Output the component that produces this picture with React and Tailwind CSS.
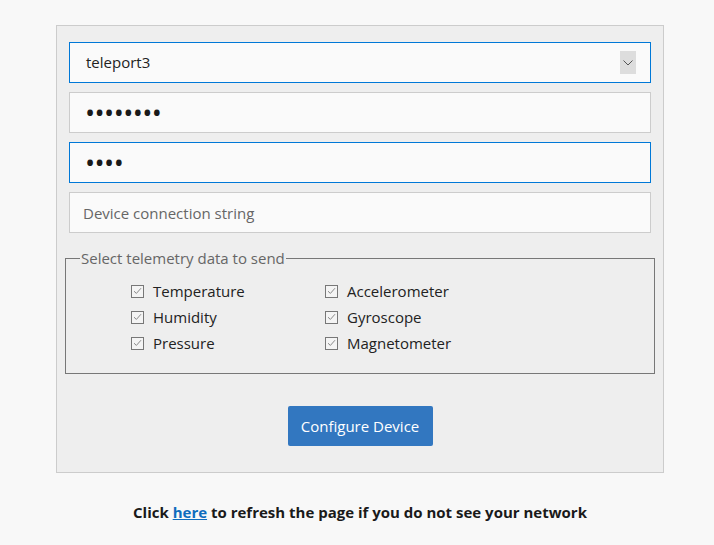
import { useState } from 'react';

const sensors = [
  ['Temperature', 'Accelerometer'],
  ['Humidity', 'Gyroscope'],
  ['Pressure', 'Magnetometer'],
];

const Check = ({ label }) => (
  <label className="flex items-center h-[26px] text-[15px] text-[#222]">
    <span className="w-[13px] h-[13px] border border-[#777] bg-[#f4f4f4] flex items-center justify-center mr-[9px]">
      <svg width="9" height="8" viewBox="0 0 9 8">
        <path d="M1 4.2 L3.4 6.4 L8 1.2" fill="none" stroke="#8a8a8a" strokeWidth="1" />
      </svg>
    </span>
    {label}
  </label>
);

export default function App() {
  const [network] = useState('teleport3');

  return (
    <div className="min-h-screen bg-[#f8f8f8] pt-[25px] font-['Open_Sans',sans-serif]">
      <div className="ml-[56px] w-[608px]">
        <div className="border border-[#cccccc] bg-[#eeeeee] px-[12px] pt-[16px] pb-[26px]">
          <div className="flex flex-col gap-[9px]">
            {/* Network select */}
            <div className="h-[41px] border border-[#0078d7] bg-[#fafafa] flex items-center justify-between pl-[16px] pr-[14px]">
              <span className="text-[15px] text-[#222]">{network}</span>
              <span className="w-[16px] h-[23px] bg-[#dddddd] flex items-center justify-center">
                <svg width="10" height="6" viewBox="0 0 10 6">
                  <path d="M0.5 0.5 L5 5 L9.5 0.5" fill="none" stroke="#555" strokeWidth="1" />
                </svg>
              </span>
            </div>
            <input
              type="password"
              readOnly
              value="12345678"
              className="h-[41px] border border-[#cccccc] bg-[#fafafa] px-[15px] text-[27px] tracking-[-0.6px] text-[#1a1a1a] outline-none"
            />
            <input
              type="password"
              readOnly
              value="1234"
              className="h-[41px] border border-[#0078d7] bg-[#fafafa] px-[15px] text-[27px] tracking-[-0.6px] text-[#1a1a1a] outline-none"
            />
            <input
              type="text"
              placeholder="Device connection string"
              className="h-[41px] border border-[#cccccc] bg-[#fafafa] px-[13px] text-[15px] text-[#222] placeholder:text-[#666] outline-none"
            />
          </div>

          {/* Telemetry selection */}
          <fieldset className="-mx-[4px] mt-[15px] border border-[#777] pl-[65px] pr-[10px] pb-[17px] pt-[10px]">
            <legend className="-ml-[51px] px-[1px] text-[15px] text-[#666] leading-[20px]">
              Select telemetry data to send
            </legend>
            <div className="flex flex-col">
              {sensors.map(([a, b]) => (
                <div key={a} className="flex">
                  <div className="w-[194px]"><Check label={a} /></div>
                  <Check label={b} />
                </div>
              ))}
            </div>
          </fieldset>

          <div className="flex justify-center mt-[32px]">
            <button className="w-[145px] h-[40px] bg-[#3277c0] rounded-[2px] text-white text-[15px]">
              Configure Device
            </button>
          </div>
        </div>

        <p className="text-center mt-[28px] text-[15px] font-bold text-[#1a1a1a]">
          Click <a href="#" className="text-[#0f6cbd] underline">here</a> to refresh the page if you do not see your network
        </p>
      </div>
    </div>
  );
}
